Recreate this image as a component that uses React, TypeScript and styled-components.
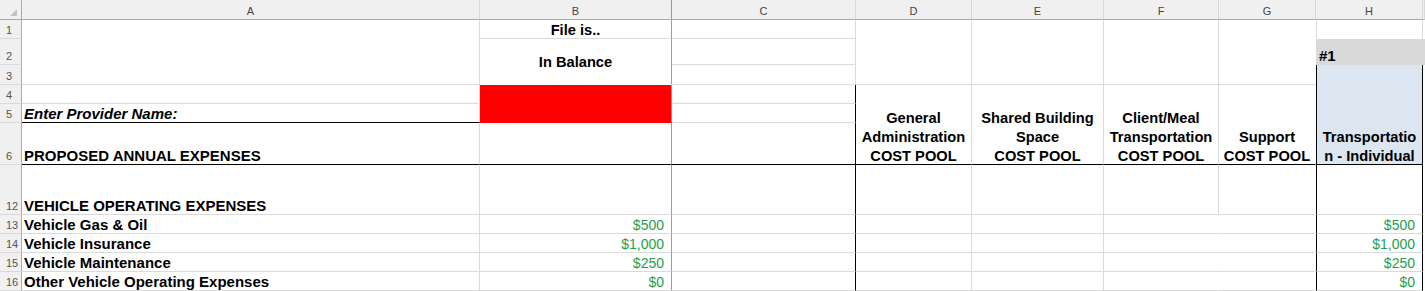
import styled, { createGlobalStyle } from 'styled-components'

const GRID = '#dadada'
const HEAD_LINE = '#ababab'
const FREEZE = '#9c9c9c'
const BLACK = '#000'
const NONE = 'transparent'
const GREEN = '#1f9e4c'
const RED = '#ff0000'
const BLUE = '#dce6f1'
const GRAY_FILL = '#d9d9d9'

const GlobalStyle = createGlobalStyle`
  html, body {
    margin: 0;
    padding: 0;
    background: #fff;
  }
  body {
    font-family: 'Liberation Sans', Arial, sans-serif;
  }
`

const Sheet = styled.div`
  display: grid;
  grid-template-columns: 22px 458px 192px 184px 116px 132px 115px 97px 107px 1fr;
  grid-template-rows: 20px 19px 26px 20px 19px 19px 42px 50px 19px 19px 19px 19px;
  width: 1425px;
  height: 291px;
  overflow: hidden;
  background: #fff;
`

const Corner = styled.div`
  grid-column: 1;
  grid-row: 1;
  background: #f0f0f0;
  border-right: 1px solid ${HEAD_LINE};
  border-bottom: 1px solid ${HEAD_LINE};
  display: flex;
  align-items: flex-end;
  justify-content: flex-end;
  padding: 0 4px 3px 0;
  box-sizing: border-box;
`

const ColHead = styled.div<{ $c: number; $line?: string }>`
  grid-column: ${p => p.$c};
  grid-row: 1;
  background: #f0f0f0;
  border-right: 1px solid ${p => p.$line ?? GRID};
  border-bottom: 1px solid ${HEAD_LINE};
  box-sizing: border-box;
  color: #444;
  font-size: 11px;
  line-height: 13px;
  padding-top: 5px;
  text-align: center;
`

const RowHead = styled.div<{ $r: number }>`
  grid-column: 1;
  grid-row: ${p => p.$r};
  background: #f0f0f0;
  border-right: 1px solid ${HEAD_LINE};
  border-bottom: 1px solid ${GRID};
  box-sizing: border-box;
  display: flex;
  align-items: flex-end;
  padding: 0 0 1px 6px;
  color: #555;
  font-size: 11px;
  line-height: 13px;
`

interface CellProps {
  $c: number
  $r: number
  $rs?: number
  $fill?: string
  $bb?: string
  $br?: string
  $bl?: string
}

const Cell = styled.div<CellProps>`
  grid-column: ${p => p.$c};
  grid-row: ${p => p.$r} / span ${p => p.$rs ?? 1};
  background: ${p => p.$fill ?? '#fff'};
  border-right: 1px solid ${p => p.$br ?? GRID};
  border-bottom: 1px solid ${p => p.$bb ?? GRID};
  border-left: ${p => (p.$bl ? `1px solid ${p.$bl}` : 'none')};
  box-sizing: border-box;
  display: flex;
  align-items: flex-end;
  min-width: 0;
  overflow: hidden;
  white-space: nowrap;
  font-size: 14.67px;
  line-height: 16px;
  color: #000;
`

const Label = styled(Cell)<{ $italic?: boolean }>`
  font-weight: bold;
  font-size: 15px;
  font-style: ${p => (p.$italic ? 'italic' : 'normal')};
  padding: 0 0 0 2px;
`

const Title = styled(Cell)<{ $middle?: boolean }>`
  font-weight: bold;
  justify-content: center;
  align-items: ${p => (p.$middle ? 'center' : 'flex-end')};
`

const Amount = styled(Cell)`
  justify-content: flex-end;
  color: ${GREEN};
  font-size: 14px;
  padding: 0 7px 0 0;
`

const PoolHeader = styled(Cell)`
  font-weight: bold;
  justify-content: center;
  text-align: center;
  white-space: pre-line;
  line-height: 19px;
`

const PoolText = styled.span`
  margin-bottom: -2px;
`

const columns = [
  { c: 2, name: 'A' },
  { c: 3, name: 'B', line: FREEZE },
  { c: 4, name: 'C' },
  { c: 5, name: 'D' },
  { c: 6, name: 'E' },
  { c: 7, name: 'F' },
  { c: 8, name: 'G' },
  { c: 9, name: 'H' },
  { c: 10, name: '' },
]

const rowNumbers = [
  { r: 2, n: '1' },
  { r: 3, n: '2' },
  { r: 4, n: '3' },
  { r: 5, n: '4' },
  { r: 6, n: '5' },
  { r: 7, n: '6' },
  { r: 8, n: '12' },
  { r: 9, n: '13' },
  { r: 10, n: '14' },
  { r: 11, n: '15' },
  { r: 12, n: '16' },
]

const pools = [
  { c: 5, text: 'General\nAdministration\nCOST POOL' },
  { c: 6, text: 'Shared Building\nSpace\nCOST POOL' },
  { c: 7, text: 'Client/Meal\nTransportation\nCOST POOL' },
]

const expenses = [
  { r: 9, label: 'Vehicle Gas & Oil', amount: '$500' },
  { r: 10, label: 'Vehicle Insurance', amount: '$1,000' },
  { r: 11, label: 'Vehicle Maintenance', amount: '$250' },
  { r: 12, label: 'Other Vehicle Operating Expenses', amount: '$0' },
]

export default function App() {
  return (
    <>
      <GlobalStyle />
      <Sheet>
        <Corner>
          <svg width='7' height='7' viewBox='0 0 7 7'>
            <polygon points='7,0 7,7 0,7' fill='#c4c4c4' />
          </svg>
        </Corner>
        {columns.map(col => (
          <ColHead key={col.c} $c={col.c} $line={col.line}>
            {col.name}
          </ColHead>
        ))}
        {rowNumbers.map(row => (
          <RowHead key={row.r} $r={row.r}>
            {row.n}
          </RowHead>
        ))}

        {/* rows 1-3 */}
        <Cell $c={2} $r={2} $rs={3} />
        <Title $c={3} $r={2} $br={FREEZE}>File is..</Title>
        <Title $c={3} $r={3} $rs={2} $br={FREEZE} $bb={NONE} $middle>
          In Balance
        </Title>
        <Cell $c={4} $r={2} />
        <Cell $c={4} $r={3} />
        <Cell $c={4} $r={4} />
        <Cell $c={5} $r={2} $rs={3} />
        <Cell $c={6} $r={2} $rs={3} />
        <Cell $c={7} $r={2} $rs={3} />
        <Cell $c={8} $r={2} $rs={3} $br={NONE} />
        <Cell $c={9} $r={2} $bl={GRID} $bb={NONE} />
        <Label $c={9} $r={3} $fill={GRAY_FILL} $bl={GRAY_FILL} $br={GRAY_FILL} $bb={GRAY_FILL}>
          #1
        </Label>
        <Cell $c={10} $r={2} $br={NONE} $bb={NONE} />
        <Cell $c={10} $r={3} $fill={GRAY_FILL} $br={NONE} $bb={NONE} />

        {/* rows 4-6 */}
        <Cell $c={2} $r={5} />
        <Label $c={2} $r={6} $bb={BLACK} $italic>
          Enter Provider Name:
        </Label>
        <Label $c={2} $r={7} $bb={BLACK}>
          PROPOSED ANNUAL EXPENSES
        </Label>
        <Cell $c={3} $r={5} $rs={2} $fill={RED} $br={FREEZE} $bb={RED} />
        <Cell $c={3} $r={7} $br={FREEZE} $bb={BLACK} />
        <Cell $c={4} $r={5} $br={BLACK} />
        <Cell $c={4} $r={6} $br={BLACK} />
        <Cell $c={4} $r={7} $br={BLACK} $bb={BLACK} />
        {pools.map(pool => (
          <PoolHeader key={pool.c} $c={pool.c} $r={5} $rs={3} $bb={BLACK}>
            <PoolText>{pool.text}</PoolText>
          </PoolHeader>
        ))}
        <PoolHeader $c={8} $r={5} $rs={3} $bb={BLACK} $br={NONE}>
          <PoolText>{'Support\nCOST POOL'}</PoolText>
        </PoolHeader>
        <PoolHeader $c={9} $r={4} $rs={4} $fill={BLUE} $bl={BLACK} $br={BLACK} $bb={BLACK}>
          <PoolText>{'Transportatio\nn - Individual'}</PoolText>
        </PoolHeader>
        <Cell $c={10} $r={4} $rs={4} $br={NONE} $bb={NONE} />

        {/* row 12 */}
        <Label $c={2} $r={8}>VEHICLE OPERATING EXPENSES</Label>
        <Cell $c={3} $r={8} $br={FREEZE} />
        <Cell $c={4} $r={8} $br={BLACK} />
        <Cell $c={5} $r={8} />
        <Cell $c={6} $r={8} />
        <Cell $c={7} $r={8} />
        <Cell $c={8} $r={8} $br={NONE} />
        <Cell $c={9} $r={8} $bl={BLACK} $br={BLACK} />

        {/* rows 13-16 */}
        {expenses.map(row => (
          <>
            <Label key={`a${row.r}`} $c={2} $r={row.r}>
              {row.label}
            </Label>
            <Amount key={`b${row.r}`} $c={3} $r={row.r} $br={FREEZE}>
              {row.amount}
            </Amount>
            <Cell key={`c${row.r}`} $c={4} $r={row.r} $br={BLACK} />
            <Cell key={`d${row.r}`} $c={5} $r={row.r} />
            <Cell key={`e${row.r}`} $c={6} $r={row.r} />
            <Cell key={`f${row.r}`} $c={7} $r={row.r} $br={NONE} />
            <Cell key={`g${row.r}`} $c={8} $r={row.r} $br={NONE} />
            <Amount key={`h${row.r}`} $c={9} $r={row.r} $bl={BLACK} $br={BLACK}>
              {row.amount}
            </Amount>
          </>
        ))}
      </Sheet>
    </>
  )
}
